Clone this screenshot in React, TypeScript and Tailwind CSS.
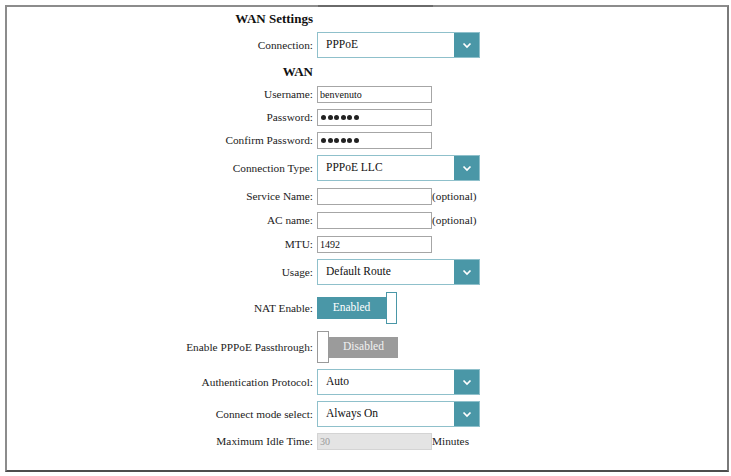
import { useState } from 'react';

const serif = "[font-family:'Liberation_Serif','Times_New_Roman',serif]";

function Chevron() {
  return (
    <svg width="10" height="7" viewBox="0 0 10 7" className="block">
      <path d="M1.5 1.5 L5 5 L8.5 1.5" fill="none" stroke="white" strokeWidth="1.7" />
    </svg>
  );
}

function Row({ label, h, children }: { label: string; h: string; children: React.ReactNode }) {
  return (
    <div className={`grid grid-cols-[306px_1fr] gap-x-[4px] items-center ${h}`}>
      <div className="text-right text-[11.3px] text-[#222]">{label}</div>
      <div className="flex items-center">{children}</div>
    </div>
  );
}

function Select({ value }: { value: string }) {
  return (
    <div className="flex h-[26px] w-[163px] border border-[#8fc0cb] bg-white">
      <div className="flex-1 flex items-center pl-[8px] text-[11.5px] text-[#111]">{value}</div>
      <div className="w-[25px] bg-[#4a97a7] flex items-center justify-center">
        <Chevron />
      </div>
    </div>
  );
}

function TextBox({ value, disabled = false }: { value: string; disabled?: boolean }) {
  return (
    <input
      type="text"
      defaultValue={value}
      disabled={disabled}
      className={`h-[17px] w-[115px] border px-[2px] text-[10px] outline-none ${serif} ${
        disabled
          ? 'bg-[#e4e4e4] border-[#d4d4d4] text-[#999]'
          : 'bg-white border-[#a6a6a6] text-[#111]'
      }`}
    />
  );
}

function PasswordBox() {
  return (
    <div className="flex h-[17px] w-[115px] items-center gap-[1.5px] border border-[#a6a6a6] bg-white px-[3px]">
      {[0, 1, 2, 3, 4, 5].map((i) => (
        <span key={i} className="h-[5px] w-[5px] rounded-full bg-[#222]" />
      ))}
    </div>
  );
}

function Toggle({ on, onClick }: { on: boolean; onClick: () => void }) {
  return (
    <button onClick={onClick} className={`flex items-center cursor-pointer ${serif}`}>
      {on ? (
        <>
          <span className="flex h-[22px] w-[69px] items-center justify-center bg-[#4a97a7] text-[11.5px] text-white">
            Enabled
          </span>
          <span className="h-[32px] w-[11px] border border-[#4a97a7] bg-white" />
        </>
      ) : (
        <>
          <span className="h-[32px] w-[12px] border border-[#9a9a9a] bg-white" />
          <span className="flex h-[21px] w-[69px] items-center justify-center bg-[#9b9b9b] text-[11.5px] text-[#f2f2f2]">
            Disabled
          </span>
        </>
      )}
    </button>
  );
}

export default function App() {
  const [nat, setNat] = useState(true);
  const [pass, setPass] = useState(false);

  return (
    <div className={`p-[5px] bg-white ${serif}`}>
      <div className="relative h-[467px] w-[724px] border-2 border-[#8c8c8c] border-b-[#4d4d4d] border-r-[#7a7a7a]">
        <div className="absolute -top-[2px] left-[311px] h-[2px] w-[115px] bg-[#6a6a6a]" />
        <div className="flex flex-col">
          <div className="grid grid-cols-[306px_1fr] h-[24px] items-center">
            <div className="text-right text-[13px] font-bold text-[#111]">WAN Settings</div>
          </div>
          <div className="h-[1px]" />
          <Row label="Connection:" h="h-[26px]">
            <Select value="PPPoE" />
          </Row>
          <div className="grid grid-cols-[306px_1fr] h-[25px] items-center">
            <div className="text-right text-[13px] font-bold text-[#111] pt-[2px]">WAN</div>
          </div>
          <Row label="Username:" h="h-[23px]">
            <TextBox value="benvenuto" />
          </Row>
          <Row label="Password:" h="h-[23px]">
            <PasswordBox />
          </Row>
          <Row label="Confirm Password:" h="h-[23px]">
            <PasswordBox />
          </Row>
          <Row label="Connection Type:" h="h-[32px]">
            <Select value="PPPoE LLC" />
          </Row>
          <Row label="Service Name:" h="h-[24px]">
            <TextBox value="" />
            <span className="text-[11.3px] text-[#222]">(optional)</span>
          </Row>
          <Row label="AC name:" h="h-[24px]">
            <TextBox value="" />
            <span className="text-[11.3px] text-[#222]">(optional)</span>
          </Row>
          <Row label="MTU:" h="h-[24px]">
            <TextBox value="1492" />
          </Row>
          <Row label="Usage:" h="h-[32px]">
            <Select value="Default Route" />
          </Row>
          <Row label="NAT Enable:" h="h-[40px]">
            <Toggle on={nat} onClick={() => setNat(!nat)} />
          </Row>
          <Row label="Enable PPPoE Passthrough:" h="h-[38px]">
            <Toggle on={pass} onClick={() => setPass(!pass)} />
          </Row>
          <Row label="Authentication Protocol:" h="h-[32px]">
            <Select value="Auto" />
          </Row>
          <Row label="Connect mode select:" h="h-[32px]">
            <Select value="Always On" />
          </Row>
          <Row label="Maximum Idle Time:" h="h-[22px]">
            <TextBox value="30" disabled />
            <span className="text-[11.3px] text-[#222]">Minutes</span>
          </Row>
        </div>
      </div>
    </div>
  );
}
